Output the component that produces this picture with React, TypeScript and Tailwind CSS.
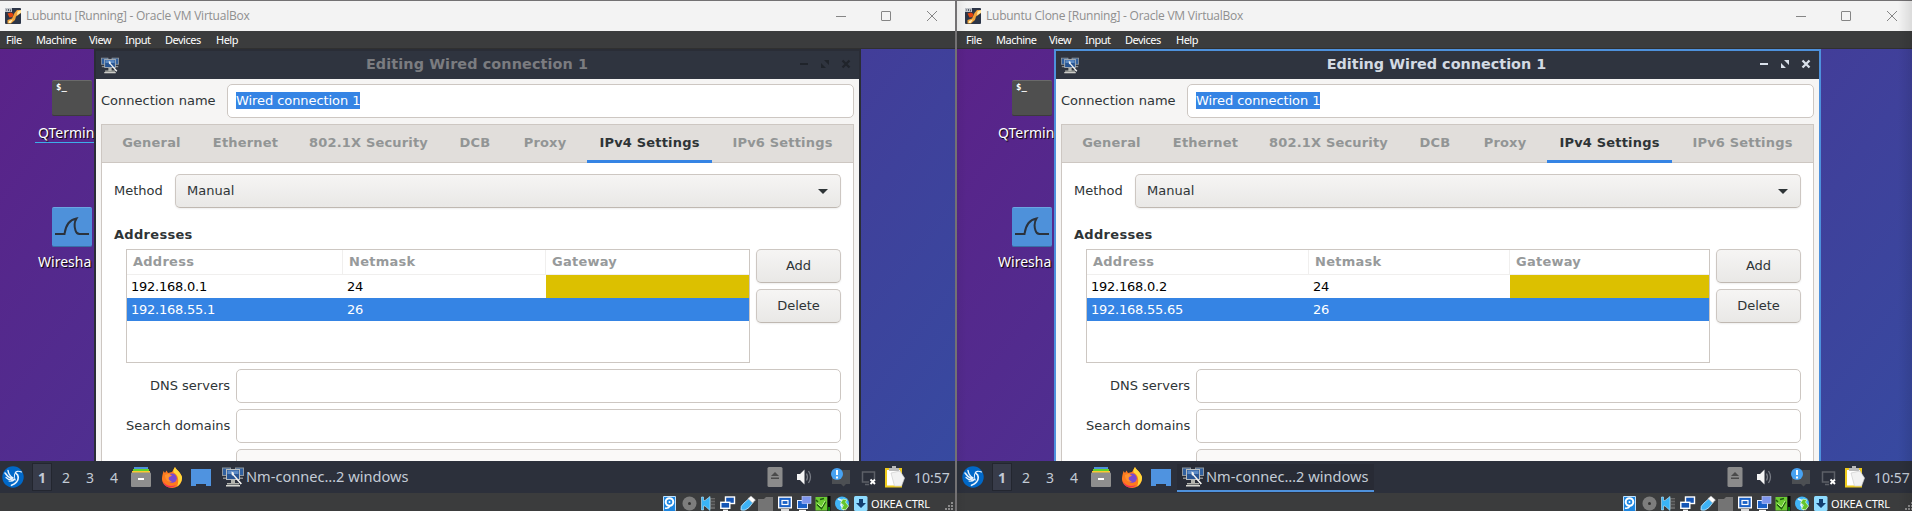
import React from "react";

type Row = { address: string; netmask: string };
type Vm = {
  title: string;
  active: boolean;
  rows: Row[];
};

const NetworkIcon = ({ w, h }: { w: number; h: number }) => (
  <svg width={w} height={h} viewBox="0 0 22 20" className="shrink-0">
    <rect x="0.500" y="1" width="8" height="7.500" fill="#31609f" stroke="#8e979f" />
    <rect x="13.500" y="1" width="8" height="7.500" fill="#31609f" stroke="#8e979f" />
    <path d="M1 10.500h4V12H1zM17 10.500h4V12h-4z" fill="#8d9194" />
    <rect x="4.500" y="2.500" width="13" height="10" fill="#285593" stroke="#b9bdbe" strokeWidth="1" />
    <path d="M5.500 3.500h11V7h-11z" fill="#5b8ac4" />
    <path d="M9 13h4v3h4v1.500H5V16h4z" fill="#b4b5ae" />
    <path d="M4 18h14v1.500H4z" fill="#d6d6d0" />
    <path d="M9.500 4.500l2.200 1 .3 2 8 9-1.500 1-7-8.500-1.800-1z" fill="#f3f3f1" />
  </svg>
);

const VBoxIcon = () => (
  <svg width="16" height="16" viewBox="0 0 16 16" className="shrink-0">
    <rect width="16" height="16" rx="1" fill="#2c3547" />
    <path d="M9.500 5L12 2h4v3l-5 3.500-1 3.500-4 3.500H2.500v-3.500L7 10.500z" fill="#f2a33a" />
    <path d="M2.500 5.500L6 4.500l2.500 1.500-1 3-3 .5z" fill="#e2440f" />
    <path d="M12.500 3.500L16 2v2.500L12 7.500z" fill="#fde9a8" />
    <path d="M4 13l4-1.500-2.500 3.500H3.500z" fill="#fff0b8" />
    <path d="M0 0h7v4H0z" fill="#bfc3c8" />
    <path d="M1 1.500h1v1H1zM3 1h1v2H3zM5 1.500h1v2H5z" fill="#555b66" />
  </svg>
);

function TitleBar({ title }: { title: string }) {
  return (
    <div className="flex h-[31px] shrink-0 items-center border-t border-[#737173] bg-[#f3f3f3] pl-[5px]">
      <VBoxIcon />
      <span className="ml-[5px] w-[805px] font-['Open_Sans','Noto_Sans',sans-serif] text-[12px] leading-4 tracking-[-0.24px] text-[#8f8f8f]">
        {title}
      </span>
      <svg width="111" height="12" viewBox="0 0 111 12" fill="none" stroke="#858585" className="mb-px ml-[4px] shrink-0">
        <path d="M1 6.500h10" />
        <rect x="46.500" y="1.500" width="9" height="9" rx="0.500" />
        <path d="M92 1l10 10M102 1L92 11" />
      </svg>
    </div>
  );
}

function MenuBar() {
  return (
    <div className="flex h-[18px] shrink-0 items-center border-b border-[#303030] bg-[#3b3c3d] pl-[6px] font-['Noto_Sans','Open_Sans',sans-serif] text-[11px] leading-4 tracking-[-0.5px] text-white">
      <span className="w-[30px]">File</span>
      <span className="w-[53px]">Machine</span>
      <span className="w-[36px]">View</span>
      <span className="w-[40px]">Input</span>
      <span className="w-[51px]">Devices</span>
      <span>Help</span>
    </div>
  );
}

function DesktopIcons({ underline }: { underline: boolean }) {
  return (
    <div className="flex w-[94px] shrink-0 flex-col overflow-hidden pt-[31px] font-['Noto_Sans','Open_Sans',sans-serif] text-[14px] leading-[20px] text-white [text-shadow:1px_1px_1px_#000]">
      <div className="ml-[52px] h-[36px] w-[40px] rounded-[2px] border-b border-t border-b-[#3c3c3c] border-t-[#6a6a6a] bg-[#4f4f4f] pl-[4px] font-['DejaVu_Sans_Mono',monospace] text-[9px] font-bold leading-[13px] [text-shadow:none]">
        $_
      </div>
      <div
        className={
          underline
            ? "ml-[35px] mt-[7px] flex h-[20px] border-b border-[#3daee9] pl-[3px]"
            : "ml-[35px] mt-[7px] flex h-[20px] border-b border-transparent pl-[3px]"
        }
      >
        QTermin
      </div>
      <div className="ml-[52px] mt-[64px] h-[40px] w-[40px] rounded-[2px] border-b border-t border-b-[#3a6ea6] border-t-[#6ba6e2] bg-[#4e91da]">
        <svg width="40" height="38" viewBox="0 0 40 38" fill="none" stroke="#2b323c" strokeWidth="2">
          <path d="M3 26h9.500c1-8 4-14 12-15.500-2.500 4-2.500 7.500-1 12 .7 2.500 2 3.500 4 3.500H37" />
        </svg>
      </div>
      <div className="ml-[38px] mt-[5px]">Wiresha</div>
    </div>
  );
}

function Tabs() {
  const tab = "flex justify-center pt-[10px] text-[#929595]";
  return (
    <div className="flex h-[38px] shrink-0 border-b border-[#cdc7c2] bg-[#e1dedb] pl-[8px] font-bold tracking-[0.18px]">
      <span className={`${tab} w-[83px]`}>General</span>
      <span className={`${tab} w-[105px]`}>Ethernet</span>
      <span className={`${tab} w-[141px]`}>802.1X Security</span>
      <span className={`${tab} w-[72px]`}>DCB</span>
      <span className={`${tab} w-[68px]`}>Proxy</span>
      <span className="ml-[8px] flex h-[38px] w-[125px] justify-center border-b-[3px] border-[#3584e4] pt-[10px] text-[#2e3436]">
        IPv4 Settings
      </span>
      <span className={`${tab} ml-[6px] w-[129px]`}>IPv6 Settings</span>
    </div>
  );
}

function AddressTable({ rows, wide }: { rows: Row[]; wide: boolean }) {
  const c1 = wide ? "w-[222px]" : "w-[216px]";
  const c2 = wide ? "w-[201px]" : "w-[203px]";
  return (
    <div className="h-[114px] w-[624px] border border-[#cdc7c2] bg-white">
      <div className="flex h-[25px] border-b border-[#f0efee] font-bold leading-[23px] tracking-[0.25px] text-[#979a9b]">
        <span className={`${c1} h-[24px] border-r border-[#f0efee] pl-[6px]`}>Address</span>
        <span className={`${c2} h-[24px] border-r border-[#f0efee] pl-[6px]`}>Netmask</span>
        <span className="pl-[6px]">Gateway</span>
      </div>
      {rows.map((r, i) => (
        <div
          key={r.address}
          className={
            i === 1
              ? "flex h-[23px] bg-[#3584e4] leading-[23px] tracking-[-0.24px] text-white"
              : "flex h-[23px] leading-[23px] tracking-[-0.24px] text-black"
          }
        >
          <span className={`${c1} pl-[4px]`}>{r.address}</span>
          <span className={`${c2} pl-[4px]`}>{r.netmask}</span>
          <span className={i === 0 ? "grow bg-[#dcc000]" : "grow"} />
        </div>
      ))}
    </div>
  );
}

const Button = ({ children }: { children: React.ReactNode }) => (
  <button className="flex h-[34px] w-[85px] items-start justify-center rounded-[5px] border border-[#cdc7c2] border-b-[#bfb8b1] bg-gradient-to-b from-[#f6f5f4] to-[#e9e8e6] pt-[8px] leading-[15px] shadow-[0_1px_2px_rgba(0,0,0,0.07)]">
    {children}
  </button>
);

const Field = ({ label }: { label: string }) => (
  <div className="mt-[6px] flex h-[34px] items-start">
    <span className="mr-[6px] w-[104px] pt-[9px] text-right">{label}</span>
    <div className="h-[34px] w-[605px] rounded-[5px] border border-[#cdc7c2] bg-white" />
  </div>
);

function Dialog({ vm }: { vm: Vm }) {
  return (
    <div
      className={
        vm.active
          ? "flex h-[500px] w-[767px] shrink-0 flex-col border-2 border-[#4e91dc] bg-[#f6f5f4]"
          : "flex h-[500px] w-[767px] shrink-0 flex-col border-2 border-[#2a2d36] bg-[#f6f5f4]"
      }
    >
      <div className="flex h-[28px] shrink-0 items-center bg-[#2f343f] pl-[5px]">
        <NetworkIcon w={18} h={17} />
        <span
          className={
            vm.active
              ? "mt-[5px] w-[716px] self-start pr-[1px] text-center text-[14.4px] font-bold leading-[17px] text-[#d3dae3]"
              : "mt-[5px] w-[716px] self-start text-center text-[14.4px] font-bold leading-[17px] tracking-[0.1px] text-[#7b7c80]"
          }
        >
          Editing Wired connection 1
        </span>
        <svg
          width="52"
          height="10"
          viewBox="0 0 52 10"
          className={
            vm.active
              ? "-ml-[35px] mb-[2px] shrink-0 text-[#d9e0ea]"
              : "-ml-[35px] mb-[2px] shrink-0 text-[#20242b]"
          }
        >
          <path d="M0 4h8v2H0z" fill="currentColor" />
          <path d="M24 1h5v5zM21 4l5 5h-5z" fill="currentColor" />
          <path d="M42.500 1.500l7 7M49.500 1.500l-7 7" stroke="currentColor" strokeWidth="2.300" />
        </svg>
      </div>
      <div className="flex flex-col px-[5px] pt-[5px] text-[13px] leading-[15px] text-[#2e3436]">
        <div className="flex h-[34px] items-start">
          <span className="w-[126px] pt-[9px]">Connection name</span>
          <div className="flex h-[34px] w-[627px] items-start rounded-[5px] border border-[#cdc7c2] bg-white pl-[8px] pt-[7px]">
            <span className="h-[17px] bg-[#3584e4] pt-[1px] tracking-[-0.07px] text-white">Wired connection 1</span>
          </div>
        </div>
        <div className="mt-[6px] flex flex-col border border-[#cdc7c2] bg-white">
          <Tabs />
          <div className="flex flex-col pl-[12px] pt-[11px]">
            <div className="flex h-[34px] items-start">
              <span className="w-[61px] pt-[9px]">Method</span>
              <div className="flex h-[34px] w-[666px] items-start justify-between rounded-[5px] border border-[#cdc7c2] border-b-[#bfb8b1] bg-gradient-to-b from-[#f6f5f4] to-[#e9e8e6] pl-[11px] pr-[12px] pt-[8px] shadow-[0_1px_2px_rgba(0,0,0,0.07)]">
                <span>Manual</span>
                <svg width="10" height="5" viewBox="0 0 10 5" className="mt-[6px]">
                  <path d="M0 0h10L5 5z" fill="#2e3436" />
                </svg>
              </div>
            </div>
            <span className="mt-[19px] h-[15px] font-bold tracking-[0.3px]">Addresses</span>
            <div className="ml-[12px] mt-[7px] flex gap-[6px]">
              <AddressTable rows={vm.rows} wide={vm.active} />
              <div className="flex flex-col gap-[6px]">
                <Button>Add</Button>
                <Button>Delete</Button>
              </div>
            </div>
            <div className="ml-[12px] flex flex-col">
              <Field label="DNS servers" />
              <Field label="Search domains" />
              <div className="mt-[6px] flex h-[34px] items-start">
                <span className="mr-[6px] w-[104px] pt-[10px] text-right text-[#929595]">DHCP client ID</span>
                <div className="h-[34px] w-[605px] rounded-[5px] border border-[#cdc7c2] bg-[#faf9f8]" />
              </div>
            </div>
          </div>
        </div>
      </div>
    </div>
  );
}

const LubuntuIcon = () => (
  <svg width="22" height="22" viewBox="0 0 22 22" className="ml-[2px] shrink-0">
    <circle cx="11" cy="11" r="10.700" fill="#0068c8" />
    <g fill="none" stroke="#eaf4fd" strokeLinecap="round">
      <path d="M19.500 6c-3-1.300-5.800-1-6.500 1.500" strokeWidth="1.200" />
      <path d="M14 7.500c3 1.500 2.800 6 .5 8.500-1.200 1.400-3 2.500-5 3.300" strokeWidth="1.700" />
      <path d="M3 7c1.500 2.500 4 4.500 7 6M6 4.500c.5 3.500 2.500 6 5 7.500" strokeWidth="1.500" />
      <path d="M4 11.500c2 2 5 2.800 8 2M7 15c2 .6 4 0 5.500-1.500" strokeWidth="1.200" />
      <path d="M12.500 8.500c-.3 2.500 0 4 .8 5.500" strokeWidth="1" />
    </g>
  </svg>
);

const FilesIcon = () => (
  <svg width="20" height="20" viewBox="0 0 20 20" className="ml-[5px] shrink-0">
    <path d="M3 0h14v3H3z" fill="#4e91da" />
    <path d="M2 2h16v3H2z" fill="#5fd32c" />
    <path d="M1 4h18v3H1z" fill="#fdc92f" />
    <rect y="5.500" width="20" height="14.500" rx="1" fill="#8e8e8e" />
    <rect x="7" y="11" width="6" height="2" fill="#fff" />
  </svg>
);

const FirefoxIcon = () => (
  <svg width="20" height="21" viewBox="0 0 20 21" className="ml-[11px] shrink-0">
    <path d="M1.500 4l1.500 2 1.500-2.500L6 6l4-1 3-5c1 2.500 5.500 5 7 10 .5 6-4 11-10 11S-.5 16 0 11C.3 8 1 6 1.500 4z" fill="#ff7a1f" />
    <path d="M13 0c1 2.500 5.500 5 7 10 .3 4-2 8-5 9.500C17 15 17 8 11.500 5.500 11 3.500 12 1.500 13 0z" fill="#ffd83a" />
    <path d="M1 14c2 5 8 6 13 4-2 2.500-9 4-12-1z" fill="#ee2f5b" />
    <circle cx="10.200" cy="11.200" r="4.600" fill="#7a4bd0" />
    <path d="M3 8c3-1.500 5-1 7 .8L7 10c-1 2 0 4 3 4.500-4 1.500-7-2-7-6.500z" fill="#ff9330" />
  </svg>
);

const TrayIcons = () => (
  <svg width="140" height="24" viewBox="767 465 140 24" className="ml-auto shrink-0">
    <rect x="767.500" y="467" width="15" height="20" rx="1.500" fill="#8b8b8b" />
    <path d="M771 476l4-4 4 4zM771 477.500h8v1.500h-8z" fill="#4b4b4b" />
    <path d="M797 474h3l4.500-4.500v15L800 480h-3z" fill="#f5f5f5" />
    <path d="M806.500 473.500q2 3.500 0 7M808.500 471q4 6 0 12" fill="none" stroke="#787c84" strokeWidth="1.300" />
    <path d="M832 470h18v14h-4l-2.500 2.500L841 484h-9z" fill="#4c4f53" />
    <circle cx="837" cy="474" r="6" fill="#47a2f2" />
    <path d="M836 470h2v5h-2zM836 476.500h2v2h-2z" fill="#fff" />
    <path d="M869 482h-6.500v-10h12v7M865 484.500h4" fill="none" stroke="#5d6068" strokeWidth="1.500" />
    <path d="M870.500 479.500l4.500 4.500M875 479.500l-4.500 4.500" stroke="#fff" strokeWidth="1.900" />
    <rect x="886" y="469" width="15" height="17.500" fill="#fff" stroke="#edca1c" strokeWidth="2" />
    <path d="M889 468h3v-2h4v2h3v3h-10z" fill="#b9b9b9" />
    <path d="M891 473l9-2 4.500 7-3 8h-7z" fill="#f2f2f2" stroke="#cfcfcf" strokeWidth="0.700" />
  </svg>
);

function Taskbar({ active }: { active: boolean }) {
  return (
    <div className="flex h-[32px] w-[955px] shrink-0 items-center bg-[#2c303b] font-['Noto_Sans','Open_Sans',sans-serif] text-[14px] text-[#c3cbd6]">
      <LubuntuIcon />
      <span className="ml-[8px] flex h-[28px] w-[20px] items-center justify-center border border-[#23262f] bg-[#383c4a] font-bold">1</span>
      <span className="ml-[2px] w-[24px] text-center">2</span>
      <span className="w-[24px] text-center">3</span>
      <span className="w-[24px] text-center">4</span>
      <FilesIcon />
      <FirefoxIcon />
      <svg width="20" height="18" viewBox="0 0 20 18" className="ml-[9px] mt-[2px] shrink-0">
        <path d="M0 0h20v17h-5v-2H5v2H0z" fill="#4f93e0" />
      </svg>
      <div
        className={
          active
            ? "ml-[6px] mt-[1px] flex h-[28px] w-[197px] items-center border-b-2 border-[#4e91dc] bg-[#282b35] pl-[5px]"
            : "ml-[6px] mt-[1px] flex h-[28px] w-[197px] items-center border-b-2 border-transparent pl-[5px]"
        }
      >
        <NetworkIcon w={22} h={20} />
        <span className="ml-[2px] text-[14.600px]">Nm-connec…2 windows</span>
      </div>
      <TrayIcons />
      <span className="w-[48px] pl-[7px]">10:57</span>
    </div>
  );
}

function StatusBar() {
  return (
    <div className="flex h-[18px] w-[955px] shrink-0 items-start overflow-hidden bg-[#3b3c3d] pl-[660px] pt-[2px]">
      <svg width="211" height="16" viewBox="660 495 211 16" className="shrink-0">
        <rect x="663" y="496" width="13" height="15" rx="1" fill="#bfe2ff" />
        <rect x="664" y="497" width="11" height="14" fill="#1d86e0" />
        <circle cx="669.500" cy="502" r="3.800" fill="#1d86e0" stroke="#fff" strokeWidth="2" />
        <circle cx="669.500" cy="502" r="1" fill="#fff" />
        <path d="M665 508q3 1 5-2" fill="none" stroke="#fff" strokeWidth="1.500" />
        <circle cx="689.500" cy="503.500" r="7" fill="#7d7d7d" />
        <circle cx="689.500" cy="503.500" r="1.500" fill="#333" />
        <path d="M710 498h5v11h-5z" fill="#666" />
        <path d="M711 500h4M711 503h4M711 506h4" stroke="#333" />
        <path d="M701.500 497v13h2v-4h1.500l5 4.500v-14l-5 4h-1.500V497z" fill="#39b4f7" stroke="#b8e7ff" strokeWidth="0.600" />
        <rect x="725.500" y="497" width="9" height="6.500" fill="#1555b5" stroke="#fff" strokeWidth="1.400" />
        <rect x="720.800" y="502.300" width="9" height="6" fill="#1555b5" stroke="#fff" strokeWidth="1.400" />
        <path d="M723 510.300h5" stroke="#fff" strokeWidth="1.300" />
        <path d="M741 510q-1-4 3-7l5-4.500 4 4-4 5q-4 4-8 2.500z" fill="#3db2f5" stroke="#c7eaff" strokeWidth="0.800" />
        <path d="M748 498.500l3-2.500 4.500 4-3 3z" fill="#fff" stroke="#aaa" strokeWidth="0.500" />
        <path d="M758 499h6l2-2h7v14h-15z" fill="#747474" />
        <rect x="778" y="496.500" width="14" height="12" fill="#fff" />
        <rect x="779.300" y="497.800" width="11.400" height="9.400" fill="#1961c7" />
        <rect x="782" y="500.500" width="6" height="4" fill="#1961c7" stroke="#fff" strokeWidth="1.200" />
        <path d="M781 510h8" stroke="#fff" strokeWidth="1.600" />
        <rect x="797.500" y="500.500" width="10" height="8" fill="#1a60c8" stroke="#e4efff" />
        <rect x="802" y="496.500" width="9" height="7" fill="#7e96ec" stroke="#c5d1ff" strokeWidth="0.600" />
        <path d="M799 510.500h7" stroke="#fff" strokeWidth="1.500" />
        <rect x="815.500" y="497" width="12" height="13.500" fill="#6ccb33" />
        <path d="M817 504.500l4.500 4 4-7M820 499.500l4-1M816 500l2 2" fill="none" stroke="#1d5d0b" strokeWidth="1.600" />
        <path d="M817.500 503.500l4 3.500 3.500-6" fill="none" stroke="#c9ff9b" strokeWidth="1" />
        <rect x="827.500" y="496" width="3" height="15" fill="#050805" />
        <path d="M829 507v4" stroke="#19e519" />
        <circle cx="842" cy="503.500" r="7" fill="#41b5f6" />
        <path d="M838 499l5 2-2 4 3 5" fill="none" stroke="#e2f6ff" strokeWidth="1.700" />
        <path d="M843 499l4 1-1.500 2 3 4-3 4-4-1 2-4-3-2z" fill="#65c52d" stroke="#e3ffd0" strokeWidth="0.700" />
        <rect x="854" y="496" width="13.500" height="15" rx="1.500" fill="#8fdcff" />
        <path d="M859 499h4v4h3l-5 5-5-5h3z" fill="#123f70" />
      </svg>
      <span className="w-[75px] shrink-0 font-['Noto_Sans','Open_Sans',sans-serif] text-[11px] leading-[18px] tracking-[-0.2px] text-white">
        OIKEA CTRL
      </span>
      <svg width="9" height="16" viewBox="0 0 9 16" className="shrink-0 -ml-[1px]" fill="#8b8b8b">
        <path d="M6 7h2v2H6zM3 10h2v2H3zM6 10h2v2H6zM0 13h2v2H0zM3 13h2v2H3zM6 13h2v2H6z" />
      </svg>
    </div>
  );
}

function VmContent({ vm }: { vm: Vm }) {
  return (
    <>
      <TitleBar title={vm.title} />
      <MenuBar />
      <div className="flex h-[412px] shrink-0 overflow-hidden">
        <DesktopIcons underline={!vm.active} />
        <Dialog vm={vm} />
      </div>
      <Taskbar active={vm.active} />
      <StatusBar />
    </>
  );
}

const vms: Vm[] = [
  {
    title: "Lubuntu [Running] - Oracle VM VirtualBox",
    active: false,
    rows: [
      { address: "192.168.0.1", netmask: "24" },
      { address: "192.168.55.1", netmask: "26" },
    ],
  },
  {
    title: "Lubuntu Clone [Running] - Oracle VM VirtualBox",
    active: true,
    rows: [
      { address: "192.168.0.2", netmask: "24" },
      { address: "192.168.55.65", netmask: "26" },
    ],
  },
];

export default function App() {
  return (
    <div className="flex h-[511px] w-[1912px] overflow-hidden whitespace-nowrap bg-[#3b3c3d] font-['DejaVu_Sans',sans-serif]">
      <div className="flex w-[955px] shrink-0 flex-col overflow-hidden bg-[linear-gradient(127deg,#5b2188,#364ba1)]">
        <VmContent vm={vms[0]} />
      </div>
      <div className="w-[2px] shrink-0 bg-[#737173]" />
      <div className="relative flex w-[955px] shrink-0 overflow-hidden bg-[linear-gradient(127deg,#5b2188,#364ba1)]">
        <div className="flex w-[3px] shrink-0 flex-col">
          <div className="h-[31px] border-t border-[#737173] bg-[#f3f3f3]" />
          <div className="h-[18px] border-b border-[#303030] bg-[#3b3c3d]" />
          <div className="h-[412px]" />
          <div className="h-[32px] bg-[#2c303b]" />
          <div className="h-[18px] bg-[#3b3c3d]" />
        </div>
        <div className="flex w-[952px] shrink-0 flex-col overflow-hidden">
          <VmContent vm={vms[1]} />
        </div>
        <div className="absolute inset-y-0 right-0 w-[14px] bg-gradient-to-r from-transparent to-black/10" />
        <div className="absolute inset-y-0 left-0 w-[10px] bg-gradient-to-l from-transparent to-black/5" />
      </div>
    </div>
  );
}
